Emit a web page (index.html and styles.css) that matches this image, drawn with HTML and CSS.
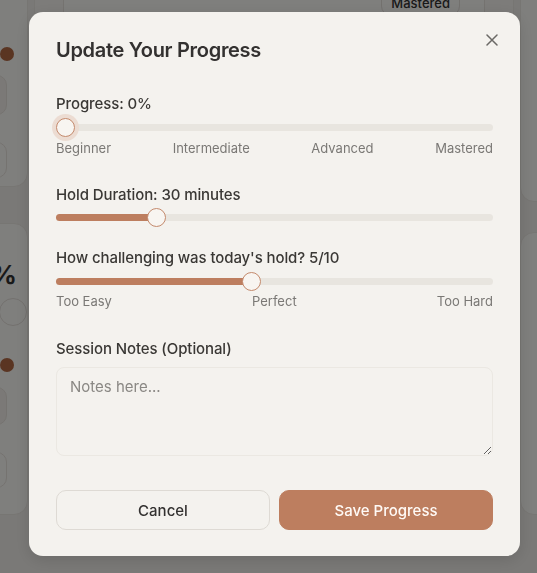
FILE: index.html
```html
<!DOCTYPE html>
<html lang="en">
<head>
<meta charset="utf-8">
<title>Update Your Progress</title>
<link rel="stylesheet" href="styles.css">
</head>
<body>
<div class="page">
  <div class="col col-left">
    <div class="card card-l1">
      <span class="dot"></span>
      <div class="box box-a"></div>
      <div class="box box-b"></div>
    </div>
    <div class="card card-l2">
      <span class="pct">%</span>
      <span class="ring"></span>
      <span class="dot"></span>
      <div class="box box-a"></div>
      <div class="box box-b"></div>
    </div>
  </div>
  <div class="col col-mid">
    <div class="card card-m1">
      <div class="inner">
        <span class="badge">Mastered</span>
      </div>
    </div>
  </div>
  <div class="col col-right">
    <div class="card card-r1"></div>
    <div class="card card-r2"></div>
  </div>
</div>

<div class="overlay">
  <div class="modal">
    <div class="modal-head">
      <h2 class="title">Update Your Progress</h2>
      <button class="close" aria-label="Close">
        <svg width="12" height="12" viewBox="0 0 12 12"><path d="M1 1L11 11M11 1L1 11" stroke="#6b6966" stroke-width="1.5" stroke-linecap="round"/></svg>
      </button>
    </div>

    <div class="field field-progress">
      <div class="label">Progress: 0%</div>
      <div class="slider" style="--p:0">
        <div class="fill"></div>
        <div class="thumb thumb-focus"></div>
      </div>
      <div class="ticks">
        <span>Beginner</span><span>Intermediate</span><span>Advanced</span><span>Mastered</span>
      </div>
    </div>

    <div class="field field-hold">
      <div class="label">Hold Duration: 30 minutes</div>
      <div class="slider slider-tight" style="--p:0.2174">
        <div class="fill"></div>
        <div class="thumb"></div>
      </div>
    </div>

    <div class="field field-challenge">
      <div class="label">How challenging was today's hold? 5/10</div>
      <div class="slider" style="--p:0.4444">
        <div class="fill"></div>
        <div class="thumb"></div>
      </div>
      <div class="ticks ticks-tight">
        <span>Too Easy</span><span>Perfect</span><span>Too Hard</span>
      </div>
    </div>

    <div class="field field-notes">
      <div class="label">Session Notes (Optional)</div>
      <textarea class="notes" placeholder="Notes here..."></textarea>
    </div>

    <div class="actions">
      <button class="btn btn-cancel">Cancel</button>
      <button class="btn btn-save">Save Progress</button>
    </div>
  </div>
</div>
</body>
</html>
```
FILE: styles.css
```css
* { box-sizing: border-box; }
html, body { margin: 0; padding: 0; }
body {
  width: 537px;
  height: 573px;
  overflow: hidden;
  background: #f4f2ee;
  font-family: Inter, "Noto Sans", sans-serif;
  color: #383633;
}

/* ---- background page ---- */
.page {
  display: grid;
  grid-template-columns: 248px 480px 248px;
  column-gap: 6px;
  margin-left: -220px;
  margin-top: -40px;
}
.col { display: flex; flex-direction: column; }
.card {
  background: #fffefb;
  border: 1px solid #efece6;
  border-radius: 14px;
}
.col-left { row-gap: 36px; }
.card-l1 { height: 227px; padding: 0 20px 0 0; display: flex; flex-direction: column; align-items: flex-end; }
.card-l2 { height: 292px; padding: 0 20px 0 0; display: flex; flex-direction: column; align-items: flex-end; }
.card-l1 .dot { margin-top: 86px; }
.dot { width: 14px; height: 14px; border-radius: 50%; background: #b46a44; margin-right: -7px; }
.box { width: 200px; border: 1px solid #ebe7e0; background: #f6f3ee; border-radius: 10px; }
.card-l1 .box-a { height: 40px; margin-top: 14px; }
.card-l1 .box-b { height: 36px; margin-top: 27px; background: #fffefb; }
.pct { margin-top: 34px; font-size: 26px; font-weight: 700; color: #333; margin-right: -10px; line-height: 34px; }
.ring { width: 28px; height: 28px; border-radius: 50%; border: 1px solid #e6e2dc; margin-top: 6px; margin-right: -20px; }
.card-l2 .dot { margin-top: 32px; }
.card-l2 .box-a { height: 38px; margin-top: 15px; }
.card-l2 .box-b { height: 36px; margin-top: 27px; background: #fffefb; }

.card-m1 { height: 70px; padding: 0 28px; border-top: none; border-radius: 0 0 14px 14px; background: #fbf9f5; }
.inner { height: 70px; background: #fffefb; border-left: 1px solid #ebe7e0; border-right: 1px solid #ebe7e0; display: flex; justify-content: flex-end; align-items: flex-end; padding: 0 24px 20px 0; }
.badge { font-size: 13px; font-weight: 500; color: #333; border: 1px solid #e6e2dc; border-radius: 10px; padding: 0 9px; height: 26px; line-height: 24px; margin-bottom: -6px; }

.col-right { row-gap: 30px; }
.card-r1 { height: 242px; }
.card-r2 { height: 283px; }

/* ---- overlay + modal ---- */
.overlay {
  position: fixed;
  inset: 0;
  background: rgba(0, 0, 0, 0.5);
  display: flex;
  justify-content: center;
  padding-top: 12px;
}
.modal {
  width: 491px;
  height: 544px;
  margin-left: 12px;
  background: #f4f2ee;
  border-radius: 14px;
  padding: 26px 27px 0 27px;
  box-shadow: 0 4px 16px rgba(0,0,0,0.12);
}
.modal-head { display: flex; justify-content: space-between; align-items: flex-start; }
.title {
  margin: 0;
  font-size: 20px;
  font-weight: 600;
  letter-spacing: -0.3px;
  line-height: 24px;
  color: #333130;
}
.close {
  border: none;
  background: none;
  padding: 0;
  margin: -5px -6px 0 0;
  width: 14px; height: 14px;
  display: flex; align-items: center; justify-content: center;
}

.field { display: flex; flex-direction: column; }
.label {
  font-size: 15px;
  font-weight: 500;
  line-height: 20px;
  color: #3a3835;
  letter-spacing: -0.1px;
}
.field-progress { margin-top: 32px; }
.field-hold { margin-top: 29px; }
.field-challenge { margin-top: 27px; }
.field-notes { margin-top: 30px; }

.slider {
  position: relative;
  height: 7px;
  border-radius: 4px;
  background: #e8e5df;
  margin-top: 10px;
}
.slider-tight { margin-top: 9px; }
.fill {
  height: 100%;
  border-radius: 4px;
  background: #bd7e5f;
  width: calc(9px + var(--p) * (100% - 18px));
}
.thumb {
  position: absolute;
  top: 50%;
  left: calc(9px + var(--p) * (100% - 18px));
  width: 19px; height: 19px;
  margin: -9.5px 0 0 -9.5px;
  border-radius: 50%;
  background: #f8f5f1;
  border: 1px solid #c48a6d;
}
.thumb-focus { box-shadow: 0 0 0 4px #ecdcd2; }
.ticks {
  display: flex;
  justify-content: space-between;
  font-size: 13px;
  line-height: 16px;
  color: #7a7875;
  margin-top: 9px;
}
.ticks-tight { margin-top: 8px; }

.notes {
  margin-top: 8px;
  width: 100%;
  height: 89px;
  resize: vertical;
  border: 1px solid #ebe8e2;
  border-radius: 8px;
  background: #f4f2ee;
  padding: 9px 13px;
  font-family: Inter, "Noto Sans", sans-serif;
  font-size: 15px;
  color: #333;
  outline: none;
}
.notes::placeholder { color: #8a8884; }

.actions {
  display: grid;
  grid-template-columns: 1fr 1fr;
  column-gap: 9px;
  margin-top: 34px;
}
.btn {
  height: 40px;
  border-radius: 10px;
  font-family: Inter, "Noto Sans", sans-serif;
  font-size: 15px;
  font-weight: 500;
  cursor: pointer;
}
.btn-cancel { background: #f4f2ee; border: 1px solid #dedad4; color: #333130; }
.btn-save { background: #bd7e5f; border: 1px solid #bd7e5f; color: #fffaf6; }
```
